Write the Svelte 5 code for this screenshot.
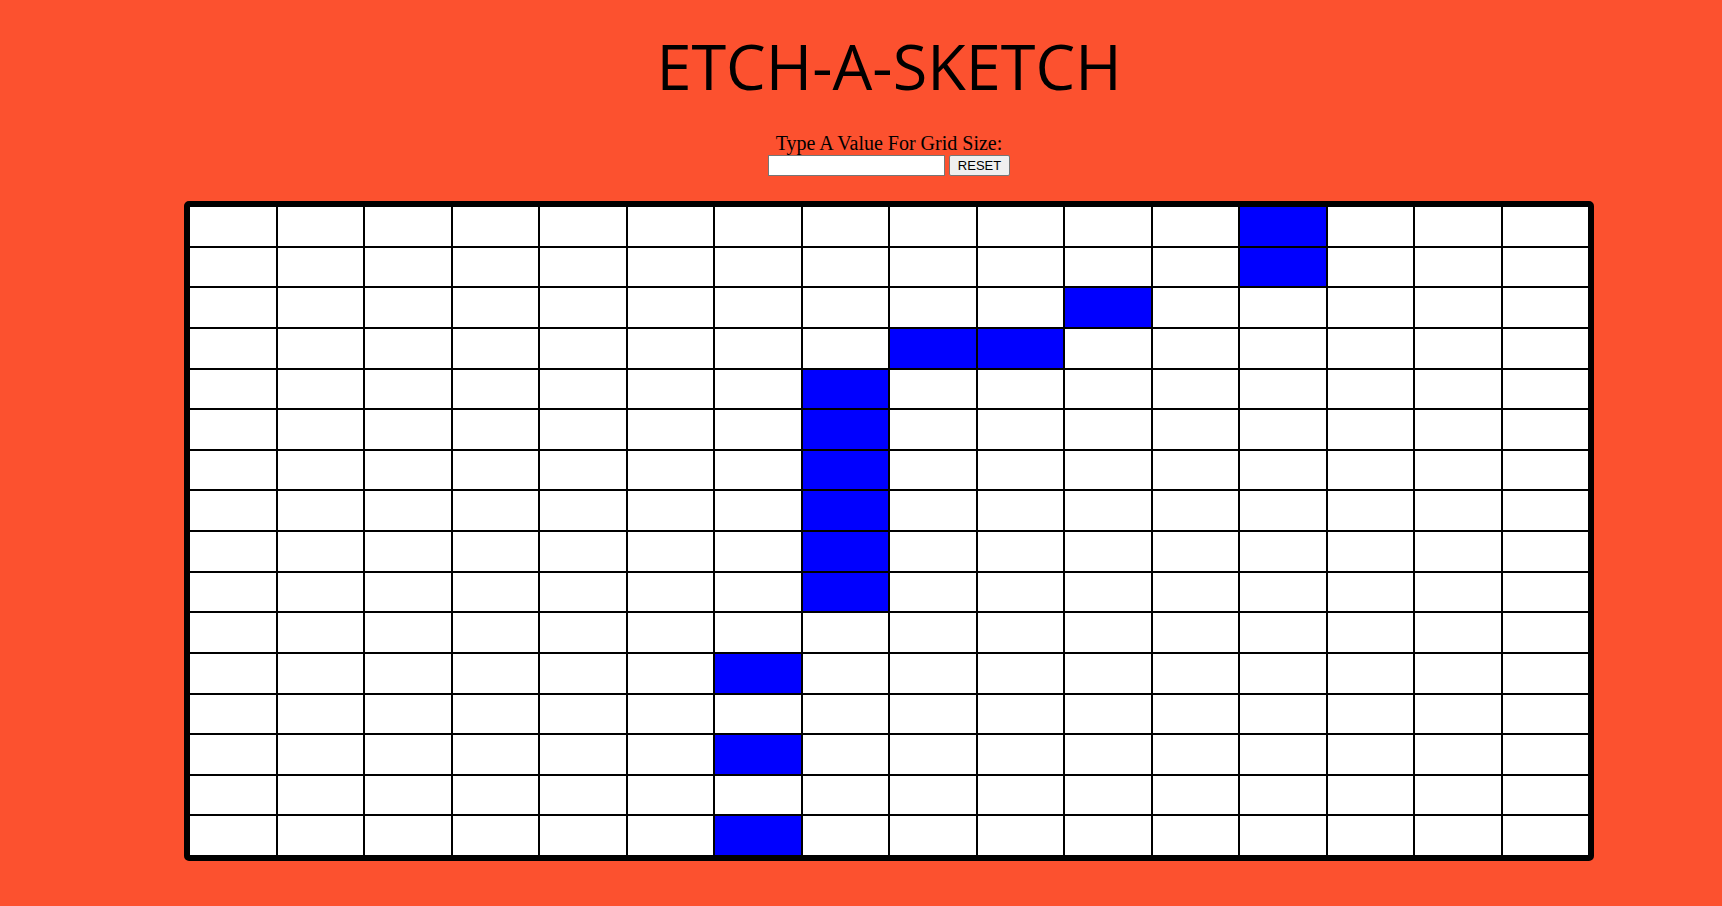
<script>
  const size = 16;
  let painted = $state([
    '0-12', '1-12', '2-10', '3-8', '3-9', '4-7', '5-7', '6-7', '7-7',
    '8-7', '9-7', '11-6', '13-6', '15-6'
  ]);
  let count = $state(size);
  let value = $state('');

  const cells = $derived(
    Array.from({ length: count * count }, (_, i) => `${Math.floor(i / count)}-${i % count}`)
  );

  function paint(id) {
    if (!painted.includes(id)) painted.push(id);
  }

  function reset(event) {
    event.preventDefault();
    const next = parseInt(value, 10);
    if (next > 0 && next <= 100) count = next;
    painted = [];
  }
</script>

<main>
  <h1>ETCH-A-SKETCH</h1>
  <form onsubmit={reset}>
    <label for="grid-size">Type A Value For Grid Size:</label>
    <div class="controls">
      <input id="grid-size" type="text" bind:value />
      <button type="submit">RESET</button>
    </div>
  </form>
  <div
    class="board"
    style="grid-template-columns: repeat({count}, 1fr); grid-template-rows: repeat({count}, 1fr)"
  >
    {#each cells as id (id)}
      <div
        class="cell"
        class:painted={painted.includes(id)}
        role="presentation"
        onmouseenter={() => paint(id)}
      ></div>
    {/each}
  </div>
</main>

<style>
  :global(body) {
    margin: 0;
    background: #fc512f;
  }

  main {
    display: flex;
    flex-direction: column;
    align-items: center;
    padding: 22px 128px 44px 184px;
    color: #000;
    font-family: "Liberation Serif", "Times New Roman", serif;
  }

  h1 {
    margin: 0;
    font-family: "Open Sans", sans-serif;
    font-size: 63px;
    line-height: 88px;
    font-weight: 500;
    white-space: nowrap;
  }

  form {
    display: flex;
    flex-direction: column;
    align-items: center;
    margin: 22px 0 25px;
  }

  label {
    font-size: 20px;
    line-height: 23px;
  }

  .controls {
    display: flex;
    gap: 4px;
  }

  input,
  button {
    box-sizing: border-box;
    height: 21px;
    margin: 0;
    border: 1px solid #767676;
    font: 13px "Liberation Sans", Arial, sans-serif;
  }

  input {
    width: 177px;
    padding: 1px 2px;
    background: #fff;
  }

  button {
    width: 61px;
    padding: 0 0 1px;
    border-radius: 2px;
    background: #efefef;
    color: #000;
  }

  .board {
    box-sizing: border-box;
    display: grid;
    width: 100%;
    aspect-ratio: 1410 / 660;
    border: 5px solid #000;
    border-radius: 5px;
    background: #fff;
  }

  .cell {
    border: 1px solid #000;
  }

  .painted {
    background: #00f;
  }
</style>
